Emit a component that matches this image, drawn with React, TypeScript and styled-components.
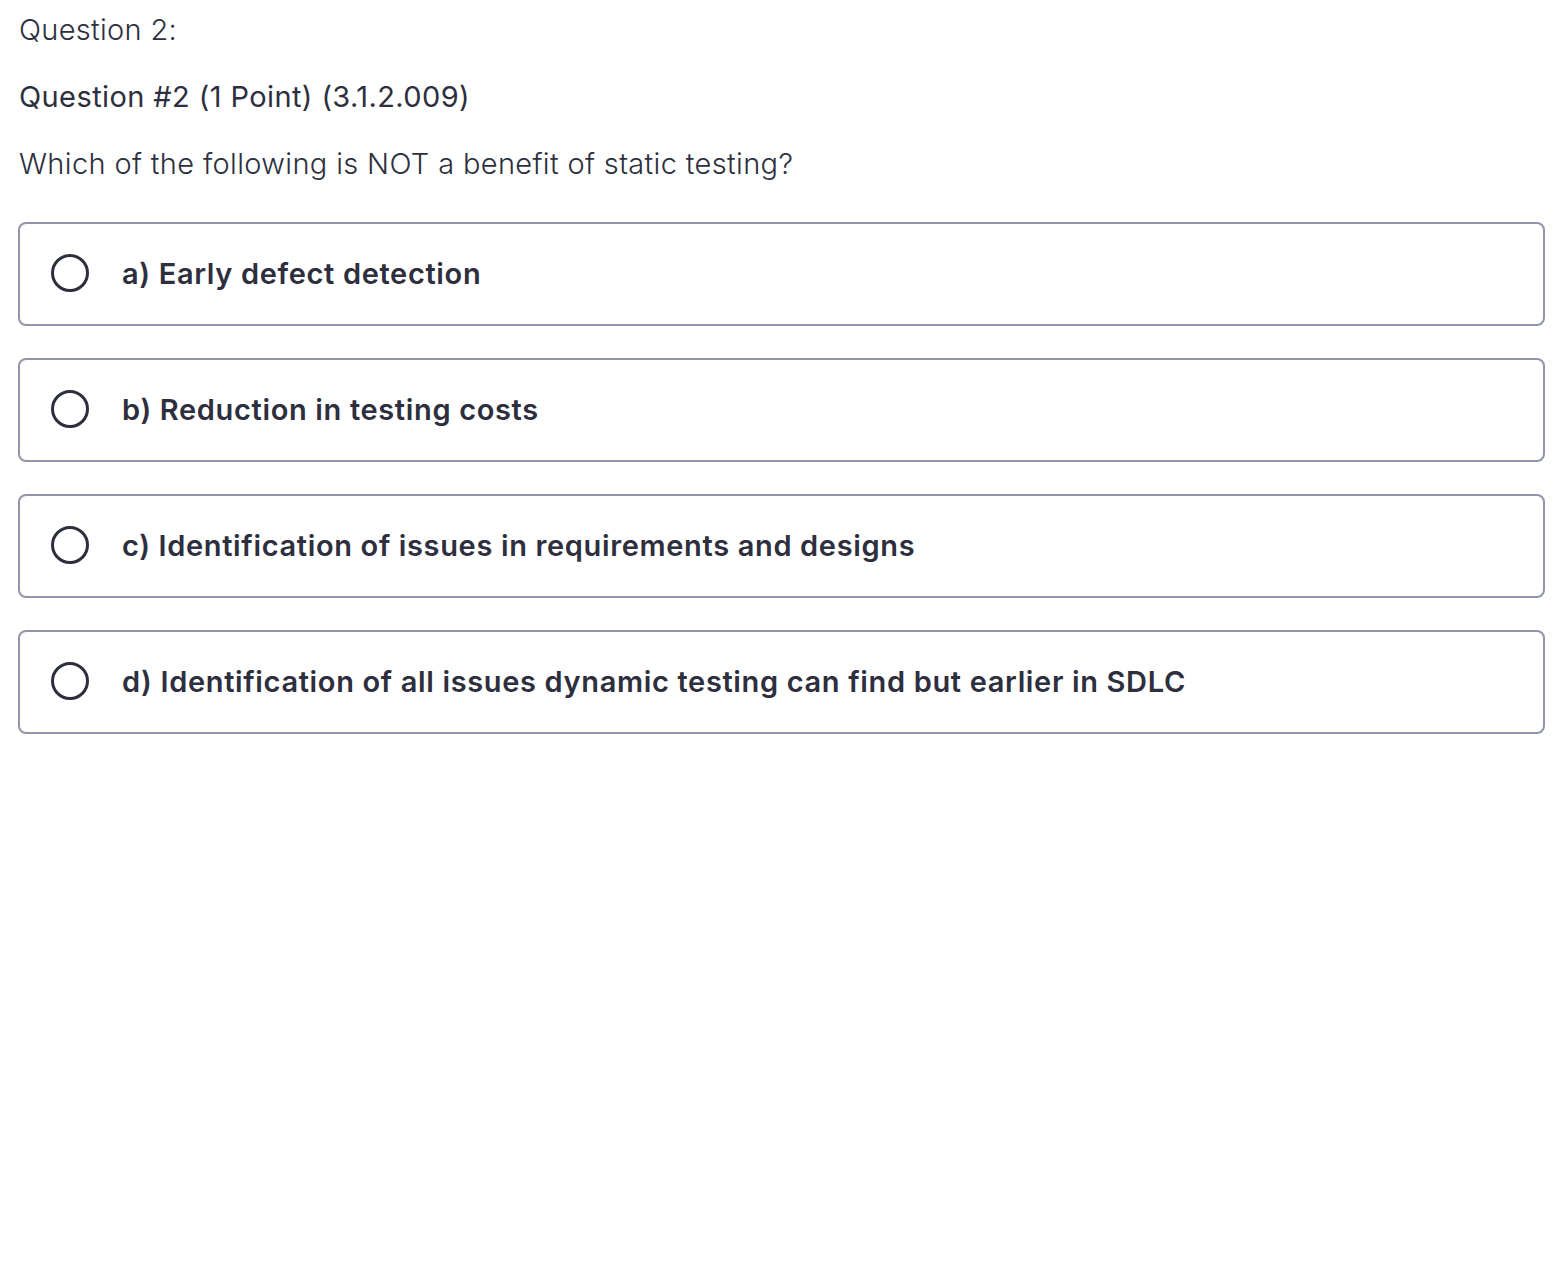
import styled, { createGlobalStyle } from 'styled-components'

const GlobalStyle = createGlobalStyle`
  html, body {
    margin: 0;
    padding: 0;
    background: #ffffff;
  }
  body {
    font-family: Inter, 'Noto Sans', sans-serif;
    color: #2d2f3e;
  }
`

const Page = styled.div`
  padding: 0 21px 0 19px;
`

const Title = styled.div`
  font-size: 29px;
  font-weight: 300;
  line-height: 36px;
  padding-top: 12px;
  letter-spacing: 0.3px;
`

const Subtitle = styled.div`
  font-size: 29px;
  font-weight: 400;
  line-height: 36px;
  margin-top: 31px;
  letter-spacing: 0.4px;
`

const Prompt = styled.div`
  font-size: 29px;
  font-weight: 300;
  line-height: 36px;
  margin-top: 31px;
  letter-spacing: 0.35px;
`

const OptionList = styled.div`
  display: flex;
  flex-direction: column;
  gap: 32px;
  margin-top: 40px;
  margin-left: -1px;
`

const Option = styled.label`
  display: flex;
  align-items: center;
  gap: 33px;
  height: 104px;
  box-sizing: border-box;
  padding: 0 31px 2px;
  border: 2px solid #9295a9;
  border-radius: 8px;
  cursor: pointer;
`

const Radio = styled.span`
  width: 38px;
  height: 38px;
  box-sizing: border-box;
  border: 3.5px solid #2d2f3e;
  border-radius: 50%;
  flex-shrink: 0;
`

const OptionText = styled.span`
  font-size: 29px;
  font-weight: 600;
  letter-spacing: 0.65px;
`

const options = [
  'a) Early defect detection',
  'b) Reduction in testing costs',
  'c) Identification of issues in requirements and designs',
  'd) Identification of all issues dynamic testing can find but earlier in SDLC',
]

export default function App() {
  return (
    <Page>
      <GlobalStyle />
      <Title>Question 2:</Title>
      <Subtitle>Question #2 (1 Point) (3.1.2.009)</Subtitle>
      <Prompt>Which of the following is NOT a benefit of static testing?</Prompt>
      <OptionList>
        {options.map((text) => (
          <Option key={text}>
            <Radio />
            <OptionText>{text}</OptionText>
          </Option>
        ))}
      </OptionList>
    </Page>
  )
}
